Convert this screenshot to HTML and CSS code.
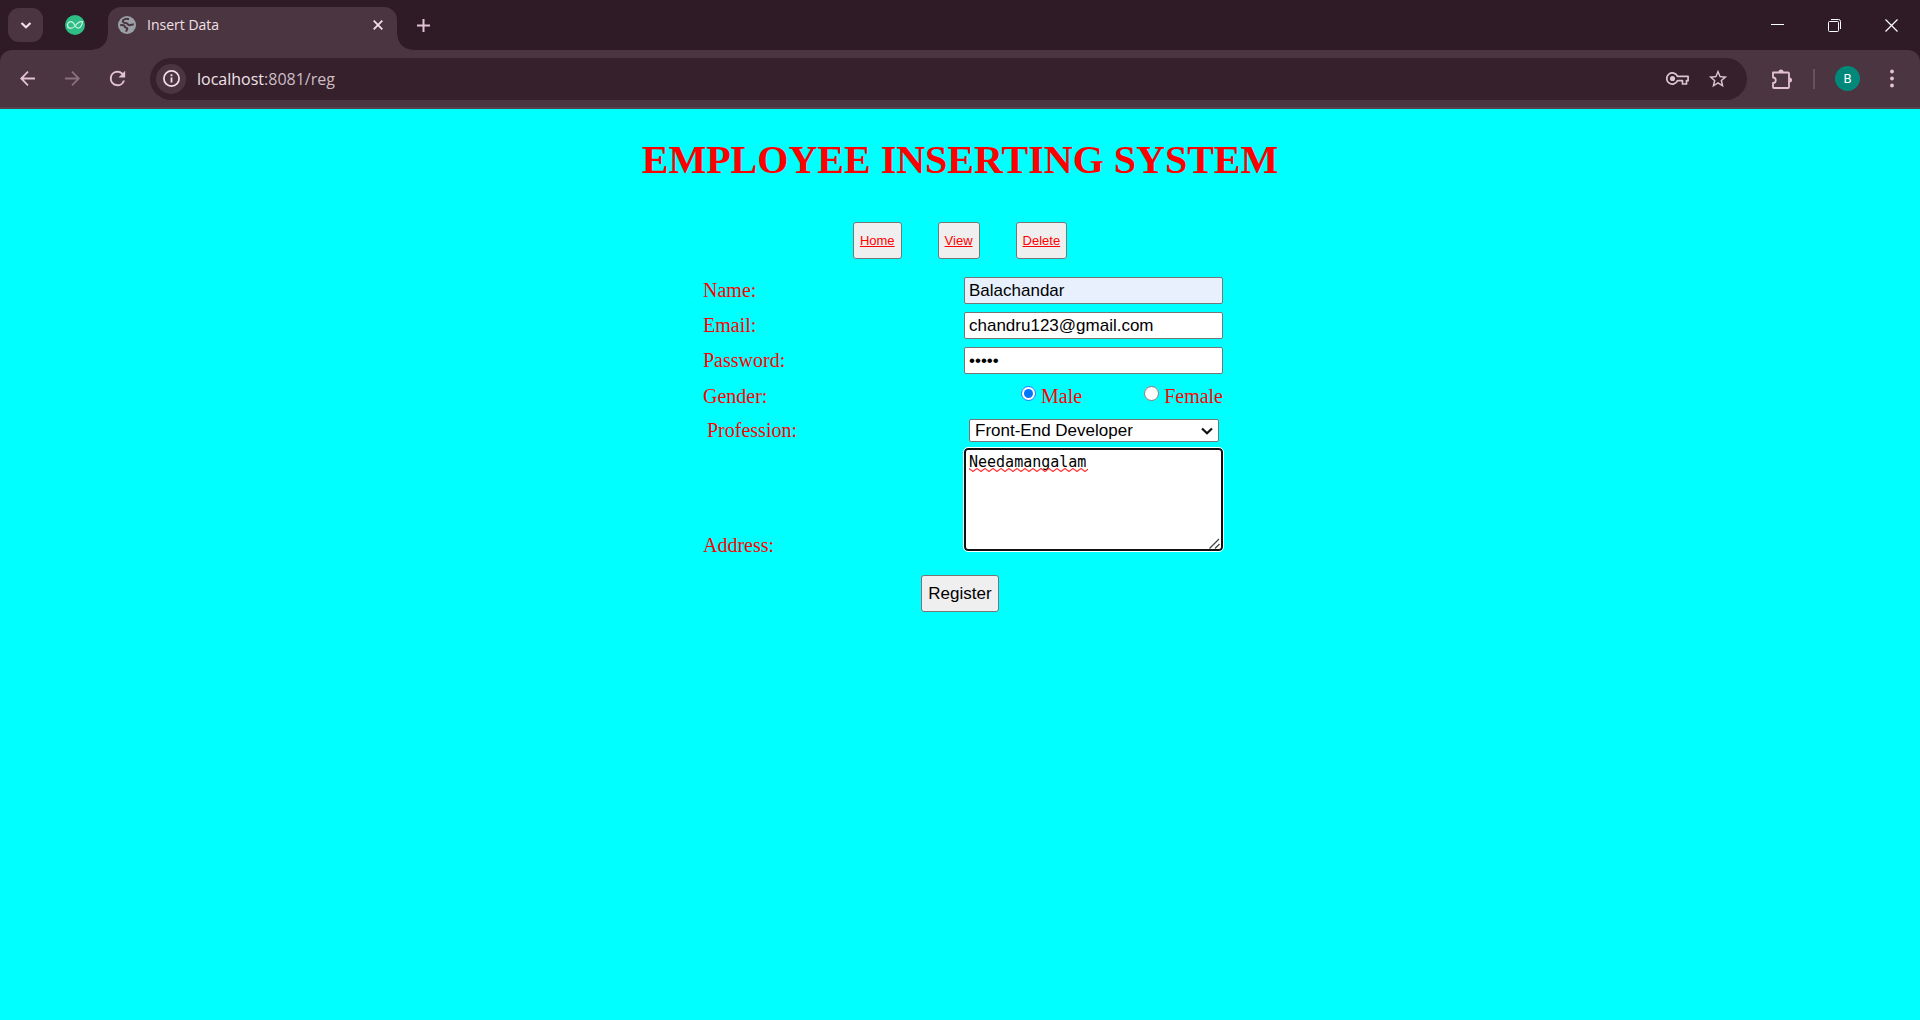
FILE: index.html
```html
<!DOCTYPE html>
<html lang="en">
<head>
<meta charset="utf-8">
<title>Insert Data</title>
<link rel="stylesheet" href="styles.css">
</head>
<body>
<header class="browser">
  <div class="tab-strip">
    <button class="tab-search" aria-label="Search tabs"><svg width="12" height="12" viewBox="0 0 12 12"><path d="M1.500 4L6 8.300 10.500 4" fill="none" stroke="currentColor" stroke-width="2.200"/></svg></button>
    <button class="pinned-tab" aria-label="Pinned tab"><svg width="20" height="20" viewBox="0 0 20 20"><circle cx="10" cy="10" r="10" fill="#2ebd85"/><path d="M17.500 6.800C15 6 12.500 8 10.500 10.500S6.500 13.500 4.800 13.200 2.300 11.500 2.500 9.800 4.300 6.500 6 6.600 9 8.500 10 10.500 12.500 13.400 14 13 17.500 9.500 17.500 6.800Z" fill="none" stroke="#c4f3df" stroke-width="1.200"/></svg></button>
    <div class="tab">
      <svg width="18" height="18" viewBox="0 0 18 18"><circle cx="9" cy="9" r="9" fill="#9aa0a6"/><path d="M11 3.200C8 2.300 5.200 3.200 4.800 5c-.3 1.600 1.700 2 3.200 1.900 1.700 0 1.700 2.200 3.300 2.300C13.300 9.300 14.500 8 15.800 8.600M2.200 9.200c1.800-.3 4.200 0 4.600 1.500.3 1.500 2.800.6 2.600 2.200-.1 1-1.200 1.200-1.200 2.800" fill="none" stroke="#4b3540" stroke-width="2"/></svg>
      <span class="tab-title">Insert Data</span>
      <button class="tab-close" aria-label="Close tab"><svg width="10" height="10" viewBox="0 0 10 10"><path d="M.7.7l8.600 8.600M9.300.7L.7 9.300" stroke="currentColor" stroke-width="1.800"/></svg></button>
    </div>
    <button class="new-tab" aria-label="New tab"><svg width="13" height="13" viewBox="0 0 13 13"><path d="M6.500 0v13M0 6.500h13" stroke="currentColor" stroke-width="2"/></svg></button>
    <div class="window-controls">
      <button aria-label="Minimize"><svg width="13" height="13" viewBox="0 0 13 13"><path d="M0 5.500h13" stroke="currentColor"/></svg></button>
      <button aria-label="Restore"><svg width="13" height="13" viewBox="0 0 13 13" fill="none" stroke="currentColor"><rect x=".5" y="2.500" width="10" height="10" rx="1"/><path d="M3 .5h7.500a2 2 0 0 1 2 2V10"/></svg></button>
      <button aria-label="Close"><svg width="13" height="13" viewBox="0 0 13 13"><path d="M.5.5l12 12M12.500.5l-12 12" stroke="currentColor" stroke-width="1.200"/></svg></button>
    </div>
  </div>
  <div class="toolbar">
    <div class="nav-buttons">
      <button aria-label="Back"><svg width="15" height="15" viewBox="0 0 15 15" fill="none" stroke="currentColor" stroke-width="1.800"><path d="M15 7.500H1.500M8 .7L1.200 7.500 8 14.300"/></svg></button>
      <button aria-label="Forward" class="dim"><svg width="15" height="15" viewBox="0 0 15 15" fill="none" stroke="currentColor" stroke-width="1.800"><path d="M0 7.500h13.500M7 .7l6.800 6.800L7 14.300"/></svg></button>
      <button aria-label="Reload"><svg width="23" height="23" viewBox="0 0 24 24"><path fill="currentColor" d="M17.650 6.350A7.950 7.950 0 0 0 12 4a8 8 0 1 0 7.730 10h-2.080A6 6 0 1 1 12 6c1.660 0 3.140.69 4.220 1.780L13 11h7V4z"/></svg></button>
    </div>
    <div class="omnibox">
      <button class="site-info" aria-label="Site information"><svg width="17" height="17" viewBox="0 0 17 17"><circle cx="8.500" cy="8.500" r="7.600" fill="none" stroke="currentColor" stroke-width="1.700"/><path d="M8.500 7.500v5M8.500 4.300v1.900" stroke="currentColor" stroke-width="1.800"/></svg></button>
      <span class="url">localhost<span class="url-path">:8081/reg</span></span>
      <div class="omnibox-actions">
        <button aria-label="Passwords"><svg width="23" height="13" viewBox="0 0 23 13"><path d="M11.500 4.300A5.600 5.600 0 1 0 11.500 8.700H16.500V12H20.500V8.700H22.100V4.300Z" fill="none" stroke="currentColor" stroke-width="1.700" stroke-linejoin="round"/><circle cx="6.500" cy="6.500" r="2.600" fill="currentColor"/></svg></button>
        <button aria-label="Bookmark this tab"><svg width="22" height="22" viewBox="0 0 24 24"><path fill="currentColor" d="M22 9.240l-7.190-.62L12 2 9.190 8.630 2 9.240l5.460 4.730L5.820 21 12 17.270 18.180 21l-1.630-7.030L22 9.240zM12 15.400l-3.760 2.270 1-4.280-3.320-2.880 4.380-.38L12 6.100l1.710 4.040 4.380.38-3.320 2.880 1 4.280L12 15.400z"/></svg></button>
      </div>
    </div>
    <div class="toolbar-end">
      <button aria-label="Extensions"><svg width="22" height="22" viewBox="0 0 22 22"><path d="M2 4.500H17a1 1 0 0 1 1 1V19a1 1 0 0 1-1 1H3a1 1 0 0 1-1-1V15a2.700 2.700 0 0 0 0-5.500Z" fill="none" stroke="currentColor" stroke-width="1.800" stroke-linejoin="round"/><path d="M7.500 4a2.500 2.500 0 0 1 5 0ZM18.500 9.500a2.500 2.500 0 0 1 0 5Z" fill="currentColor"/></svg></button>
      <span class="divider"></span>
      <button class="profile" aria-label="Profile">B</button>
      <button aria-label="Menu"><svg width="4" height="19" viewBox="0 0 4 19" fill="currentColor"><circle cx="2" cy="2.500" r="1.900"/><circle cx="2" cy="9.500" r="1.900"/><circle cx="2" cy="16.500" r="1.900"/></svg></button>
    </div>
  </div>
</header>
<main class="page">
  <h1>EMPLOYEE INSERTING SYSTEM</h1>
  <nav class="links">
    <a href="#home">Home</a>
    <a href="#view">View</a>
    <a href="#delete">Delete</a>
  </nav>
  <form class="register">
    <div class="row">
      <label for="name">Name:</label>
      <input class="field autofilled" id="name" type="text" value="Balachandar">
    </div>
    <div class="row">
      <label for="email">Email:</label>
      <input class="field" id="email" type="text" value="chandru123@gmail.com">
    </div>
    <div class="row">
      <label for="password">Password:</label>
      <input class="field" id="password" type="password" value="12345">
    </div>
    <div class="row" role="radiogroup" aria-labelledby="gender-label">
      <span id="gender-label">Gender:</span>
      <div class="choices">
        <label class="choice"><input type="radio" name="gender" checked>Male</label>
        <label class="choice"><input type="radio" name="gender">Female</label>
      </div>
    </div>
    <div class="row inset">
      <label for="profession">Profession:</label>
      <div class="select-box">
        <select id="profession"><option>Front-End Developer</option></select>
        <svg class="chevron" width="12" height="8" viewBox="0 0 12 8" aria-hidden="true"><path d="M1 1.500l5 4.700 5-4.700" fill="none" stroke="#101010" stroke-width="2.200"/></svg>
      </div>
    </div>
    <div class="row address">
      <label for="address">Address:</label>
      <div class="address-box">
        <textarea id="address" spellcheck="false">Needamangalam</textarea>
        <svg class="squiggle" width="119" height="4" aria-hidden="true"><defs><pattern id="wave" width="8" height="4" patternUnits="userSpaceOnUse"><path d="M-1 .5H0L4 3.500 8 .5H9" fill="none" stroke="#f33" stroke-width="1.200"/></pattern></defs><rect width="119" height="4" fill="url(#wave)"/></svg>
        <svg class="grip" width="11" height="11" viewBox="0 0 11 11" aria-hidden="true"><path d="M.5 10.500l9.500-9.500M6 10.500L10.500 6" stroke="#444" stroke-width="1.300"/></svg>
      </div>
    </div>
    <button class="submit" type="button">Register</button>
  </form>
</main>
</body>
</html>
```
FILE: styles.css
```css
* {
  box-sizing: border-box;
}

body {
  margin: 0;
  min-height: 100vh;
  background: #0ff;
}

/* Browser frame */
.browser {
  background: #2e1b25;
  color: #f1e0e8;
  font-family: "Open Sans", "Noto Sans", sans-serif;
}

.browser button {
  display: flex;
  align-items: center;
  justify-content: center;
  padding: 0;
  border: 0;
  background: none;
  color: inherit;
}

.browser svg {
  flex: none;
}

.tab-strip {
  display: flex;
  align-items: center;
  height: 50px;
  padding-left: 8px;
}

.browser .tab-search {
  width: 35px;
  height: 34px;
  border-radius: 11px;
  background: #4b3540;
}

.browser .pinned-tab {
  width: 20px;
  height: 20px;
  margin: 0 23px 0 22px;
}

.tab {
  position: relative;
  display: flex;
  align-items: center;
  align-self: flex-end;
  width: 289px;
  height: 43px;
  padding: 0 14px 7px 10px;
  border-radius: 13px 13px 0 0;
  background: #4b3540;
}

.tab::before,
.tab::after {
  content: "";
  position: absolute;
  bottom: 0;
  width: 15px;
  height: 15px;
}

.tab::before {
  right: 100%;
  background: radial-gradient(circle at 0 0, transparent 14px, #4b3540 15px);
}

.tab::after {
  left: 100%;
  background: radial-gradient(circle at 100% 0, transparent 14px, #4b3540 15px);
}

.tab-title {
  flex: 1;
  margin-left: 11px;
  font-size: 14px;
  line-height: 20px;
}

.browser .new-tab {
  width: 52px;
  height: 34px;
  color: #e3c2d3;
}

.window-controls {
  display: flex;
  margin-left: auto;
  color: #fff;
}

.window-controls button {
  width: 57px;
  height: 50px;
}

.toolbar {
  display: flex;
  align-items: center;
  height: 59px;
  padding: 0 5px;
  border-bottom: 2px solid #57434d;
  border-radius: 12px 12px 0 0;
  background: #4b3540;
  color: #e3c2d3;
}

.nav-buttons {
  display: flex;
  margin-right: 10px;
}

.nav-buttons button {
  width: 45px;
  height: 40px;
}

.browser .dim {
  color: #8b707e;
}

.omnibox {
  display: flex;
  flex: 1;
  align-items: center;
  height: 42px;
  padding: 0 18px 0 6px;
  border-radius: 21px;
  background: #35202b;
  color: #f1e0e8;
}

.browser .site-info {
  width: 30px;
  height: 30px;
  border-radius: 15px;
  background: #4b3540;
}

.url {
  flex: 1;
  margin-left: 11px;
  font-size: 16px;
  line-height: 24px;
}

.url-path {
  color: #cdbcc5;
}

.omnibox-actions {
  display: flex;
  gap: 18px;
  color: #dac6d0;
}

.toolbar-end {
  display: flex;
  align-items: center;
  gap: 20px;
  padding: 0 21px 0 24px;
}

.divider {
  width: 2px;
  height: 20px;
  background: #685260;
}

.browser .profile {
  width: 25px;
  height: 25px;
  margin-right: 10px;
  border-radius: 50%;
  background: #00897b;
  color: #fff;
  font: 13px Roboto, sans-serif;
}

/* Page */
.page {
  display: flex;
  flex-direction: column;
  align-items: center;
  padding-top: 28px;
  color: #f00;
  font-family: "Liberation Serif", "Times New Roman", serif;
  font-size: 20px;
}

h1 {
  margin: 0 0 39px;
  font-size: 40px;
  line-height: 46px;
}

.links {
  display: flex;
  gap: 36px;
  margin-bottom: 18px;
}

.links a {
  padding: 0 6px;
  border: 1px solid #767676;
  border-radius: 3px;
  background: #efefef;
  color: #f00;
  font: 13px/35px "Liberation Sans", Arial, sans-serif;
}

.register {
  display: flex;
  flex-direction: column;
  align-items: center;
}

.row {
  display: grid;
  grid-template-columns: 261px 259px;
  align-items: center;
  height: 27px;
  margin-bottom: 8px;
  padding-left: 6px;
  line-height: 22px;
}

.row > label {
  padding-bottom: 2px;
}

.field,
select,
textarea,
.submit {
  margin: 0;
  border: 1px solid #767676;
  border-radius: 2px;
  background: #fff;
  color: #000;
  font: 17px "Liberation Sans", Arial, sans-serif;
}

.field {
  height: 27px;
  padding: 0 4px;
}

.autofilled {
  background: #e8f0fe;
}

.choices {
  display: flex;
  justify-content: flex-end;
  gap: 62px;
}

.choice {
  display: flex;
  align-items: center;
  gap: 5px;
}

.choice input {
  width: 15px;
  height: 15px;
  margin: 0 0 4px;
}

.inset {
  margin-bottom: 4px;
}

.inset label {
  padding-left: 4px;
}

.select-box {
  position: relative;
  display: flex;
  padding: 0 4px 0 5px;
}

select {
  flex: 1;
  height: 23px;
  padding: 0 5px;
  appearance: none;
}

.chevron {
  position: absolute;
  top: 8px;
  right: 10px;
  pointer-events: none;
}

.address {
  align-items: end;
  height: auto;
  margin-bottom: 24px;
}

.address > label {
  padding: 0;
  line-height: 12px;
}

.address-box {
  position: relative;
  height: 103px;
}

textarea {
  display: block;
  width: 100%;
  height: 100%;
  padding: 2px 3px;
  border: 2px solid #101010;
  border-radius: 4px;
  outline: 1px solid #fff;
  font: 15px/20px "DejaVu Sans Mono", monospace;
  resize: none;
}

.squiggle {
  position: absolute;
  top: 20px;
  left: 5px;
}

.grip {
  position: absolute;
  right: 3px;
  bottom: 2px;
  pointer-events: none;
}

.submit {
  height: 37px;
  padding: 0 6px;
  border-radius: 3px;
  background: #efefef;
}
```
